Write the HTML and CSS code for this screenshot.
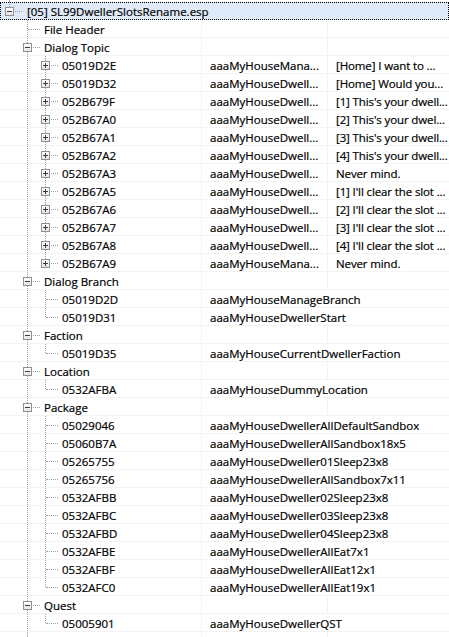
FILE: index.html
```html
<!DOCTYPE html>
<html>
<head>
<meta charset="utf-8">
<link rel="stylesheet" href="styles.css">
</head>
<body>
<div class="tree">
  <div class="stub"></div>

  <div class="row focus">
    <div class="c1 wide"><span class="g l"><i class="box minus"></i></span><span class="txt">[05] SL99DwellerSlotsRename.esp</span></div>
  </div>

  <div class="row"><div class="c1"><span class="g n"></span><span class="g t"></span><span class="txt">File Header</span></div><div class="c2"></div><div class="c3"></div></div>

  <div class="row"><div class="c1"><span class="g n"></span><span class="g t"><i class="box minus"></i></span><span class="txt">Dialog Topic</span></div><div class="c2"></div><div class="c3"></div></div>
  <div class="row"><div class="c1"><span class="g n"></span><span class="g v"></span><span class="g t"><i class="box plus"></i></span><span class="txt">05019D2E</span></div><div class="c2">aaaMyHouseMana...</div><div class="c3">[Home] I want to ...</div></div>
  <div class="row"><div class="c1"><span class="g n"></span><span class="g v"></span><span class="g t"><i class="box plus"></i></span><span class="txt">05019D32</span></div><div class="c2">aaaMyHouseDwell...</div><div class="c3">[Home] Would you...</div></div>
  <div class="row"><div class="c1"><span class="g n"></span><span class="g v"></span><span class="g t"><i class="box plus"></i></span><span class="txt">052B679F</span></div><div class="c2">aaaMyHouseDwell...</div><div class="c3">[1] This's your dwell...</div></div>
  <div class="row"><div class="c1"><span class="g n"></span><span class="g v"></span><span class="g t"><i class="box plus"></i></span><span class="txt">052B67A0</span></div><div class="c2">aaaMyHouseDwell...</div><div class="c3">[2] This's your dwel...</div></div>
  <div class="row"><div class="c1"><span class="g n"></span><span class="g v"></span><span class="g t"><i class="box plus"></i></span><span class="txt">052B67A1</span></div><div class="c2">aaaMyHouseDwell...</div><div class="c3">[3] This's your dwell...</div></div>
  <div class="row"><div class="c1"><span class="g n"></span><span class="g v"></span><span class="g t"><i class="box plus"></i></span><span class="txt">052B67A2</span></div><div class="c2">aaaMyHouseDwell...</div><div class="c3">[4] This's your dwell...</div></div>
  <div class="row"><div class="c1"><span class="g n"></span><span class="g v"></span><span class="g t"><i class="box plus"></i></span><span class="txt">052B67A3</span></div><div class="c2">aaaMyHouseDwell...</div><div class="c3">Never mind.</div></div>
  <div class="row"><div class="c1"><span class="g n"></span><span class="g v"></span><span class="g t"><i class="box plus"></i></span><span class="txt">052B67A5</span></div><div class="c2">aaaMyHouseDwell...</div><div class="c3">[1] I'll clear the slot ...</div></div>
  <div class="row"><div class="c1"><span class="g n"></span><span class="g v"></span><span class="g t"><i class="box plus"></i></span><span class="txt">052B67A6</span></div><div class="c2">aaaMyHouseDwell...</div><div class="c3">[2] I'll clear the slot ...</div></div>
  <div class="row"><div class="c1"><span class="g n"></span><span class="g v"></span><span class="g t"><i class="box plus"></i></span><span class="txt">052B67A7</span></div><div class="c2">aaaMyHouseDwell...</div><div class="c3">[3] I'll clear the slot ...</div></div>
  <div class="row"><div class="c1"><span class="g n"></span><span class="g v"></span><span class="g t"><i class="box plus"></i></span><span class="txt">052B67A8</span></div><div class="c2">aaaMyHouseDwell...</div><div class="c3">[4] I'll clear the slot ...</div></div>
  <div class="row"><div class="c1"><span class="g n"></span><span class="g v"></span><span class="g l"><i class="box plus"></i></span><span class="txt">052B67A9</span></div><div class="c2">aaaMyHouseMana...</div><div class="c3">Never mind.</div></div>

  <div class="row"><div class="c1"><span class="g n"></span><span class="g t"><i class="box minus"></i></span><span class="txt">Dialog Branch</span></div><div class="c2"></div><div class="c3"></div></div>
  <div class="row"><div class="c1"><span class="g n"></span><span class="g v"></span><span class="g t"></span><span class="txt">05019D2D</span></div><div class="c2 span">aaaMyHouseManageBranch</div></div>
  <div class="row"><div class="c1"><span class="g n"></span><span class="g v"></span><span class="g l"></span><span class="txt">05019D31</span></div><div class="c2 span">aaaMyHouseDwellerStart</div></div>

  <div class="row"><div class="c1"><span class="g n"></span><span class="g t"><i class="box minus"></i></span><span class="txt">Faction</span></div><div class="c2"></div><div class="c3"></div></div>
  <div class="row"><div class="c1"><span class="g n"></span><span class="g v"></span><span class="g l"></span><span class="txt">05019D35</span></div><div class="c2 span">aaaMyHouseCurrentDwellerFaction</div></div>

  <div class="row"><div class="c1"><span class="g n"></span><span class="g t"><i class="box minus"></i></span><span class="txt">Location</span></div><div class="c2"></div><div class="c3"></div></div>
  <div class="row"><div class="c1"><span class="g n"></span><span class="g v"></span><span class="g l"></span><span class="txt">0532AFBA</span></div><div class="c2 span">aaaMyHouseDummyLocation</div></div>

  <div class="row"><div class="c1"><span class="g n"></span><span class="g t"><i class="box minus"></i></span><span class="txt">Package</span></div><div class="c2"></div><div class="c3"></div></div>
  <div class="row"><div class="c1"><span class="g n"></span><span class="g v"></span><span class="g t"></span><span class="txt">05029046</span></div><div class="c2 span">aaaMyHouseDwellerAllDefaultSandbox</div></div>
  <div class="row"><div class="c1"><span class="g n"></span><span class="g v"></span><span class="g t"></span><span class="txt">05060B7A</span></div><div class="c2 span">aaaMyHouseDwellerAllSandbox18x5</div></div>
  <div class="row"><div class="c1"><span class="g n"></span><span class="g v"></span><span class="g t"></span><span class="txt">05265755</span></div><div class="c2 span">aaaMyHouseDweller01Sleep23x8</div></div>
  <div class="row"><div class="c1"><span class="g n"></span><span class="g v"></span><span class="g t"></span><span class="txt">05265756</span></div><div class="c2 span">aaaMyHouseDwellerAllSandbox7x11</div></div>
  <div class="row"><div class="c1"><span class="g n"></span><span class="g v"></span><span class="g t"></span><span class="txt">0532AFBB</span></div><div class="c2 span">aaaMyHouseDweller02Sleep23x8</div></div>
  <div class="row"><div class="c1"><span class="g n"></span><span class="g v"></span><span class="g t"></span><span class="txt">0532AFBC</span></div><div class="c2 span">aaaMyHouseDweller03Sleep23x8</div></div>
  <div class="row"><div class="c1"><span class="g n"></span><span class="g v"></span><span class="g t"></span><span class="txt">0532AFBD</span></div><div class="c2 span">aaaMyHouseDweller04Sleep23x8</div></div>
  <div class="row"><div class="c1"><span class="g n"></span><span class="g v"></span><span class="g t"></span><span class="txt">0532AFBE</span></div><div class="c2 span">aaaMyHouseDwellerAllEat7x1</div></div>
  <div class="row"><div class="c1"><span class="g n"></span><span class="g v"></span><span class="g t"></span><span class="txt">0532AFBF</span></div><div class="c2 span">aaaMyHouseDwellerAllEat12x1</div></div>
  <div class="row"><div class="c1"><span class="g n"></span><span class="g v"></span><span class="g l"></span><span class="txt">0532AFC0</span></div><div class="c2 span">aaaMyHouseDwellerAllEat19x1</div></div>

  <div class="row"><div class="c1"><span class="g n"></span><span class="g t"><i class="box minus"></i></span><span class="txt">Quest</span></div><div class="c2"></div><div class="c3"></div></div>
  <div class="row"><div class="c1"><span class="g n"></span><span class="g v"></span><span class="g l"></span><span class="txt">05005901</span></div><div class="c2 span">aaaMyHouseDwellerQST</div></div>
  <div class="row"><div class="c1"><span class="g n"></span><span class="g v"></span></div><div class="c2"></div><div class="c3"></div></div>
</div>
</body>
</html>
```

FILE: styles.css
```css
html, body {
  margin: 0;
  padding: 0;
  background: #ffffff;
}

body {
  width: 449px;
  height: 637px;
  overflow: hidden;
  font-family: "Open Sans", "Noto Sans", sans-serif;
  font-size: 11.5px;
  color: #000000;
  -webkit-text-stroke: 0.2px #000000;
}

.tree {
  display: flex;
  flex-direction: column;
}

.stub {
  height: 2px;
  margin-left: 9px;
  border-left: 1px dotted #a0a0a0;
}

.row {
  display: grid;
  grid-template-columns: 201px 126px 1fr;
  height: 18px;
  box-sizing: border-box;
  border-bottom: 1px solid #f3f3f3;
  flex: none;
}

.row.focus {
  background: #e0ebf9;
  outline: 1px dotted #000000;
  outline-offset: -1px;
  border-bottom: none;
}

.c1, .c2, .c3 {
  white-space: nowrap;
  overflow: hidden;
  line-height: 17px;
  padding-top: 1px;
  box-sizing: border-box;
}

.c1 {
  display: flex;
  align-items: stretch;
  padding-top: 0;
}

.c1.wide {
  grid-column: 1 / -1;
}

.c2 {
  padding-left: 8px;
  border-left: 1px solid #f3f3f3;
}

.c2.span {
  grid-column: 2 / -1;
}

.c3 {
  padding-left: 8px;
  border-left: 1px solid #f3f3f3;
  letter-spacing: -0.12px;
}

.txt {
  margin-left: 8px;
  padding-top: 1px;
}

.focus .txt {
  margin-left: 9px;
}

.g {
  width: 18px;
  flex: none;
  position: relative;
}

.g.v::before,
.g.t::before,
.g.l::before {
  content: "";
  position: absolute;
  left: 9px;
  top: 0;
  bottom: 0;
  border-left: 1px dotted #a0a0a0;
}

.g.l::before {
  bottom: auto;
  height: 9px;
}

.g.t::after,
.g.l::after {
  content: "";
  position: absolute;
  left: 10px;
  top: 9px;
  width: 12px;
  border-top: 1px dotted #a0a0a0;
}

.box {
  position: absolute;
  left: 5px;
  top: 5px;
  width: 9px;
  height: 9px;
  box-sizing: border-box;
  border: 1px solid #919191;
  background: linear-gradient(#ffffff, #e4e4e4);
  z-index: 1;
}

.box::before {
  content: "";
  position: absolute;
  left: 1px;
  top: 3px;
  width: 5px;
  height: 1px;
  background: #3c3c3c;
}

.box.plus::after {
  content: "";
  position: absolute;
  left: 3px;
  top: 1px;
  width: 1px;
  height: 5px;
  background: #3c3c3c;
}
```
